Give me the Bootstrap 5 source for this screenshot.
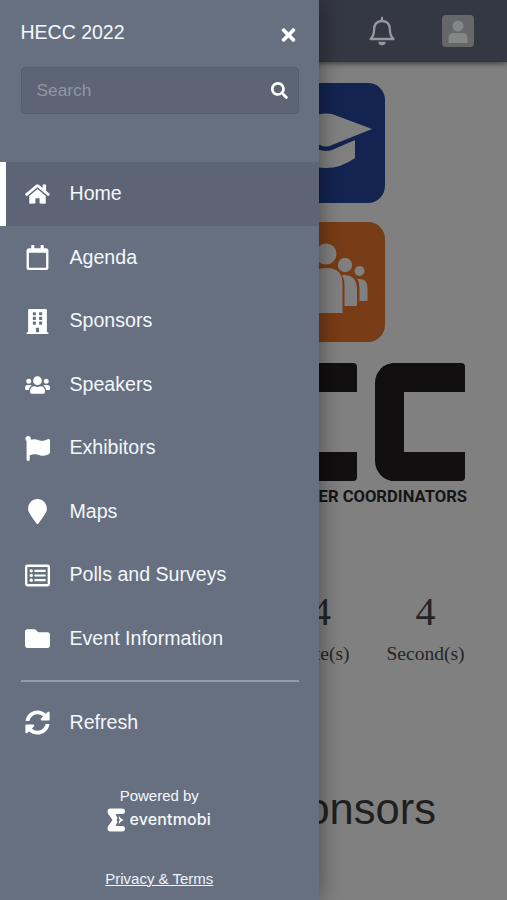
<!DOCTYPE html>
<html lang="en">
<head>
<meta charset="utf-8">
<meta name="viewport" content="width=device-width, initial-scale=1">
<title>HECC 2022</title>
<link href="https://cdn.jsdelivr.net/npm/bootstrap@5.3.0/dist/css/bootstrap.min.css" rel="stylesheet">
<style>
body{font-family:"Liberation Sans",Arial,sans-serif;background:#808080;height:900px;overflow:hidden;color:#1f1f1f}
svg{display:block;flex:none}
.topbar{height:62px;background:#343842;box-shadow:0 1px 6px rgba(0,0,0,.6);padding-right:33px;gap:45px}
.avatar{width:32px;height:32px;border-radius:4px;background:#666768}
.tiles{margin:21px 0 0 265px;gap:19px}
.tile{width:120px;height:120px;border-radius:17px;overflow:hidden}
.tile-blue{background:#132450}
.tile-orange{background:#783c16}
.wordmark{margin:21px 42px 0 0;gap:18px}
.mark-c{width:90px;height:118px;border:29px solid #110f10;border-right:0;border-radius:20px 4px 4px 20px}
.tagline{font:700 16.6px/18px Roboto,sans-serif;margin:7px 40px 0 0;text-align:right;color:#151515;white-space:nowrap}
.counter{font-family:"Liberation Serif",serif;margin:83px 42.5px 0 0;gap:37px;color:#252525}
.counter .num{font-size:40px;line-height:46px}
.counter .unit{font-size:19.5px;line-height:24px;margin-top:6.5px}
.heading{font-size:43.5px;line-height:50px;margin:118.5px 71px 0 0;text-align:right}
.drawer{position:absolute;left:0;top:0;width:318.5px;height:900px;background:#667080;color:#f4f7fb;box-shadow:0 0 22px rgba(0,0,0,.45)}
.drawer-head{height:67px;padding:0 23px 2px 20.5px;font-size:19.5px}
.search{margin:0 20px 0 20.5px;height:46.5px;background:#5c6475;border:1px solid #565e6e;border-radius:4px;padding:0 10px 0 15px;font-size:17.3px;color:#9097a5}
.search span{padding-top:1px}
.menu{margin-top:48.9px}
.item{height:63.5px;padding-left:25px;gap:19.5px;font-size:19.6px}
.item .ico{width:25px}
.item.active{background:#5c6475;border-left:6px solid #fff;padding-left:19px}
.rule{height:2px;background:#929cab;margin:9.6px 20px 9px 20.5px}
.powered{font-size:15px;line-height:18px;margin-top:32.5px}
.brand{font:500 16px/24px Inter,sans-serif;gap:3px;margin-top:3px}
.brand span{margin-top:-2px;letter-spacing:.15px}
.terms{font-size:15px;line-height:18px;margin-top:37.6px;color:#eef3f9}
</style>
<script src="https://cdn.jsdelivr.net/npm/bootstrap@5.3.0/dist/js/bootstrap.bundle.min.js"></script>
</head>
<body>
<header class="topbar d-flex align-items-center justify-content-end">
<svg width="30" height="32" viewBox="0 0 30 32" fill="none" stroke="#96989c" stroke-width="2.3" stroke-linejoin="round" stroke-linecap="round"><path d="M15 3v3M7 15.500C7 9.500 10 6 15 6s8 3.500 8 9.500c0 4.500 1.500 6.500 3.500 8.500h-23c2-2 3.500-4 3.500-8.500z"/><path d="M11.300 26.800h7.400a3.700 3.500 0 0 1-7.400 0z" fill="#96989c" stroke="none"/></svg>
<div class="avatar"><svg width="32" height="32" fill="#858686"><circle cx="16" cy="11" r="5.500"/><path d="M6.500 28v-5c0-4 2.500-5 5-5h9c2.500 0 5 1 5 5v5z"/></svg></div>
</header>
<main>
<div class="tiles d-flex flex-column">
<div class="tile tile-blue"><svg width="120" height="120" viewBox="0 0 120 120" fill="#808080"><path d="M5 46L55 31q6-1 12 0L107 46 67 62q-6 3-12 0z"/><path d="M31 57l24 10q6 2 12 0l23-10v18q-14 10-29 10T31 75z"/></svg></div>
<div class="tile tile-orange"><svg width="120" height="120" viewBox="0 0 120 120" fill="#808080"><circle cx="61" cy="32" r="10.500"/><path d="M44 91V62q0-16 17-16t16.500 16v29z"/><circle cx="80" cy="43" r="7.200"/><path d="M77 53q14-1 15 13v18H79.500V63q0-6-2.500-10z"/><circle cx="94.500" cy="49" r="5"/><path d="M92.500 57q10-1 10 9v13h-8V66q0-5-2-9z"/></svg></div>
</div>
<div class="wordmark d-flex justify-content-end"><div class="mark-c"></div><div class="mark-c"></div></div>
<div class="tagline">ER COORDINATORS</div>
<div class="counter d-flex justify-content-end text-center">
<div><div class="num">44</div><div class="unit">Minute(s)</div></div>
<div><div class="num">4</div><div class="unit">Second(s)</div></div>
</div>
<h1 class="heading fw-normal">Sponsors</h1>
</main>
<aside class="drawer">
<div class="drawer-head d-flex align-items-center justify-content-between"><span>HECC 2022</span>
<svg class="mt-1" width="15" height="20" viewBox="0 0 352 512" fill="#fff"><path d="M242.720 256l100.070-100.070c12.280-12.280 12.280-32.190 0-44.480l-22.240-22.240c-12.280-12.280-32.190-12.280-44.480 0L176 189.280 75.930 89.210c-12.280-12.280-32.190-12.280-44.480 0L9.210 111.450c-12.280 12.280-12.280 32.190 0 44.480L109.280 256 9.210 356.070c-12.280 12.280-12.280 32.190 0 44.480l22.240 22.240c12.280 12.280 32.200 12.280 44.480 0L176 322.720l100.070 100.070c12.280 12.280 32.200 12.280 44.480 0l22.240-22.240c12.280-12.280 12.280-32.190 0-44.480z"/></svg></div>
<div class="search d-flex align-items-center justify-content-between"><span>Search</span>
<svg width="17" height="17" viewBox="0 0 512 512" fill="#fff"><path d="M505 442.700L405.300 343c-4.500-4.500-10.600-7-17-7H372c27.600-35.300 44-79.700 44-128C416 93.100 322.900 0 208 0S0 93.100 0 208s93.100 208 208 208c48.300 0 92.700-16.400 128-44v16.300c0 6.400 2.500 12.500 7 17l99.700 99.700c9.400 9.400 24.600 9.400 33.900 0l28.300-28.300c9.400-9.400 9.400-24.600.1-34zM208 336c-70.700 0-128-57.200-128-128 0-70.700 57.200-128 128-128 70.700 0 128 57.200 128 128 0 70.700-57.200 128-128 128z"/></svg></div>
<nav class="menu">
<div class="item active d-flex align-items-center"><svg class="ico" height="22" viewBox="0 0 576 512" fill="#fff"><path d="M280.370 148.260L96 300.110V464a16 16 0 0 0 16 16l112.060-.29a16 16 0 0 0 15.920-16V368a16 16 0 0 1 16-16h64a16 16 0 0 1 16 16v95.640a16 16 0 0 0 16 16.050L464 480a16 16 0 0 0 16-16V300L295.670 148.260a12.190 12.190 0 0 0-15.300 0zM571.600 251.470L488 182.560V44.050a12 12 0 0 0-12-12h-56a12 12 0 0 0-12 12v72.610L318.470 43a48 48 0 0 0-61 0L4.340 251.470a12 12 0 0 0-1.600 16.900l25.500 31A12 12 0 0 0 45.150 301l235.220-193.740a12.190 12.190 0 0 1 15.300 0L530.900 301a12 12 0 0 0 16.900-1.600l25.500-31a12 12 0 0 0-1.700-16.930z"/></svg>Home</div>
<div class="item d-flex align-items-center"><svg class="ico" height="25" viewBox="0 0 448 512" fill="#fff"><path d="M400 64h-48V12c0-6.600-5.400-12-12-12h-40c-6.600 0-12 5.400-12 12v52H160V12c0-6.600-5.400-12-12-12h-40c-6.600 0-12 5.400-12 12v52H48C21.500 64 0 85.500 0 112v352c0 26.500 21.500 48 48 48h352c26.500 0 48-21.500 48-48V112c0-26.500-21.500-48-48-48zm-6 400H54c-3.300 0-6-2.700-6-6V160h352v298c0 3.300-2.700 6-6 6z"/></svg>Agenda</div>
<div class="item d-flex align-items-center"><svg class="ico" height="25" viewBox="0 0 448 512" fill="#fff" fill-rule="evenodd"><path d="M12 476h20V24Q32 0 56 0h336q24 0 24 24v452h20q12 0 12 12v24H0v-24q0-12 12-12zM128 76v40q0 12 12 12h40q12 0 12-12V76q0-12-12-12h-40q-12 0-12 12zm128 0v40q0 12 12 12h40q12 0 12-12V76q0-12-12-12h-40q-12 0-12 12zM128 172v40q0 12 12 12h40q12 0 12-12v-40q0-12-12-12h-40q-12 0-12 12zm128 0v40q0 12 12 12h40q12 0 12-12v-40q0-12-12-12h-40q-12 0-12 12zM128 268v40q0 12 12 12h40q12 0 12-12v-40q0-12-12-12h-40q-12 0-12 12zm128 0v40q0 12 12 12h40q12 0 12-12v-40q0-12-12-12h-40q-12 0-12 12zM192 396v80h64v-80q0-12-12-12h-40q-12 0-12 12z"/></svg>Sponsors</div>
<div class="item d-flex align-items-center"><svg class="ico" height="20" viewBox="0 0 640 512" fill="#fff"><path d="M96 224c35.300 0 64-28.700 64-64s-28.700-64-64-64-64 28.700-64 64 28.700 64 64 64zm448 0c35.300 0 64-28.700 64-64s-28.700-64-64-64-64 28.700-64 64 28.700 64 64 64zm32 32h-64c-17.600 0-33.500 7.100-45.100 18.600 40.300 22.100 68.900 62 75.100 109.400h66c17.700 0 32-14.300 32-32v-32c0-35.300-28.700-64-64-64zm-256 0c61.900 0 112-50.100 112-112S381.900 32 320 32 208 82.100 208 144s50.100 112 112 112zm76.800 32h-8.300c-20.800 10-43.900 16-68.500 16s-47.600-6-68.500-16h-8.300C179.600 288 128 339.600 128 403.200V432c0 26.500 21.500 48 48 48h288c26.500 0 48-21.500 48-48v-28.800c0-63.600-51.600-115.200-115.200-115.200zm-223.700-13.400C161.500 263.100 145.600 256 128 256H64c-35.300 0-64 28.700-64 64v32c0 17.700 14.300 32 32 32h65.900c6.300-47.400 34.900-87.300 75.200-109.400z"/></svg>Speakers</div>
<div class="item d-flex align-items-center"><svg class="ico" height="25" viewBox="0 0 512 512" fill="#fff"><path d="M349.565 98.783C295.978 98.783 251.721 64 184.348 64c-24.955 0-47.309 4.384-68.045 12.013a55.947 55.947 0 0 0 3.586-23.562C118.117 24.015 94.806 1.206 66.338.048 34.345-1.254 8 24.296 8 56c0 19.026 9.497 35.825 24 45.945V488c0 13.255 10.745 24 24 24h16c13.255 0 24-10.745 24-24v-94.400c28.311-12.064 63.582-22.122 114.435-22.122 53.588 0 97.844 34.783 165.217 34.783 48.169 0 86.667-16.294 122.505-40.858C506.840 359.452 512 349.571 512 339.045v-243.100c0-23.393-24.269-38.870-45.485-29.016-34.338 15.948-76.454 31.854-116.950 31.854z"/></svg>Exhibitors</div>
<div class="item d-flex align-items-center"><svg class="ico" height="25" viewBox="0 0 384 512" fill="#fff"><path d="M172.268 501.670C26.970 291.031 0 269.413 0 192 0 85.961 85.961 0 192 0s192 85.961 192 192c0 77.413-26.970 99.031-172.268 309.670-9.535 13.774-29.930 13.773-39.464 0z"/></svg>Maps</div>
<div class="item d-flex align-items-center"><svg class="ico" height="25" viewBox="0 0 512 512" fill="#fff"><rect x="24" y="56" width="464" height="400" rx="26" fill="none" stroke="#fff" stroke-width="48"/><circle cx="128" cy="160" r="34"/><circle cx="128" cy="256" r="34"/><circle cx="128" cy="352" r="34"/><rect x="192" y="138" width="232" height="44" rx="10"/><rect x="192" y="234" width="232" height="44" rx="10"/><rect x="192" y="330" width="232" height="44" rx="10"/></svg>Polls and Surveys</div>
<div class="item d-flex align-items-center"><svg class="ico" height="25" viewBox="0 0 512 512" fill="#fff"><path d="M464 128H272l-64-64H48C21.490 64 0 85.490 0 112v288c0 26.510 21.490 48 48 48h416c26.510 0 48-21.490 48-48V176c0-26.510-21.490-48-48-48z"/></svg>Event Information</div>
<div class="rule"></div>
<div class="item d-flex align-items-center"><svg class="ico" height="25" viewBox="0 0 512 512" fill="#fff"><path d="M370.720 133.280C339.458 104.008 298.888 87.962 255.848 88c-77.458.068-144.328 53.178-162.791 126.850-1.344 5.363-6.122 9.150-11.651 9.150H24.103c-7.498 0-13.194-6.807-11.807-14.176C33.933 94.924 134.813 8 256 8c66.448 0 126.791 26.136 171.315 68.685L463.030 40.970C478.149 25.851 504 36.559 504 57.941V192c0 13.255-10.745 24-24 24H345.941c-21.382 0-32.090-25.851-16.971-40.971l41.750-41.749zM32 296h134.059c21.382 0 32.090 25.851 16.971 40.971l-41.750 41.750c31.262 29.273 71.835 45.319 114.876 45.280 77.418-.07 144.315-53.144 162.787-126.849 1.344-5.363 6.122-9.150 11.651-9.150h57.304c7.498 0 13.194 6.807 11.807 14.176C478.067 417.076 377.187 504 256 504c-66.448 0-126.791-26.136-171.315-68.685L48.970 471.030C33.851 486.149 8 475.441 8 454.059V320c0-13.255 10.745-24 24-24z"/></svg>Refresh</div>
</nav>
<div class="powered text-center">Powered by</div>
<div class="brand d-flex align-items-center justify-content-center"><svg width="19" height="24" viewBox="0 0 19 24" fill="#fff"><path d="M3.500.5H15q3 0 3 2.700T15 6H8.500l2 4.200-1 1.800 1 1.800-2 4.200H15q3 0 3 2.800t-3 2.700H3.500Q.5 23.500.5 20.500q0-2 1.700-3.700L5.500 12 2.200 7.200Q.5 5.500.5 3.500q0-3 3-3z"/><path d="M12 8q1 2.600 4.500 4Q13 13.400 12 16q-.8-2 .8-4Q11.200 10 12 8z"/></svg><span>eventmobi</span></div>
<div class="terms text-center text-decoration-underline">Privacy &amp; Terms</div>
</aside>
</body>
</html>
